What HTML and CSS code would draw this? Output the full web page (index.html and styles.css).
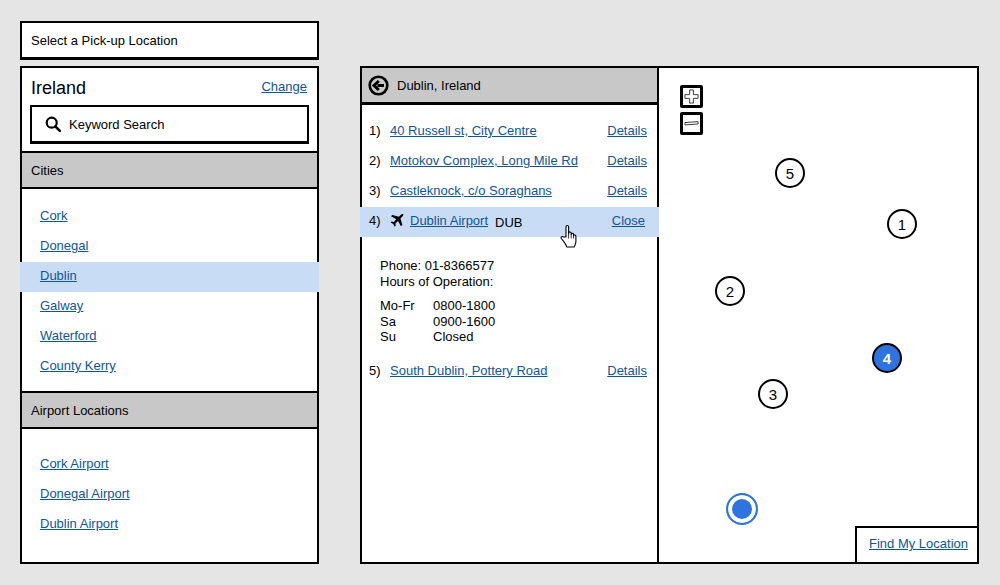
FILE: index.html
```html
<!DOCTYPE html>
<html lang="en">
<head>
<meta charset="utf-8">
<title>Select a Pick-up Location</title>
<link rel="stylesheet" href="styles.css">
</head>
<body>
<div class="page">
  <aside class="left">
    <div class="title-box">Select a Pick-up Location</div>
    <div class="panel">
      <div class="country">
        <div class="country-row"><span class="country-name">Ireland</span><a href="#">Change</a></div>
        <div class="search">
          <svg class="search-icon" width="16" height="16" viewBox="0 0 16 16"><circle cx="6.7" cy="6.7" r="5" fill="none" stroke="#000" stroke-width="2.2"/><path d="M10.3 10.3 14.8 14.8" stroke="#000" stroke-width="2.6" stroke-linecap="round"/></svg>
          <span>Keyword Search</span>
        </div>
      </div>
      <div class="bar">Cities</div>
      <ul class="list list-cities">
        <li><a href="#">Cork</a></li>
        <li><a href="#">Donegal</a></li>
        <li class="sel"><a href="#">Dublin</a></li>
        <li><a href="#">Galway</a></li>
        <li><a href="#">Waterford</a></li>
        <li><a href="#">County Kerry</a></li>
      </ul>
      <div class="bar">Airport Locations</div>
      <ul class="list list-airports">
        <li><a href="#">Cork Airport</a></li>
        <li><a href="#">Donegal Airport</a></li>
        <li><a href="#">Dublin Airport</a></li>
      </ul>
    </div>
  </aside>
  <main class="frame">
    <section class="results">
      <div class="bar bar-back">
        <svg width="21" height="21" viewBox="0 0 21 21"><circle cx="10.5" cy="10.5" r="8.8" fill="none" stroke="#000" stroke-width="2.6"/><path d="M16 10.5H9.5M10.8 6 6 10.5 10.8 15" fill="none" stroke="#000" stroke-width="3"/></svg>
        <span>Dublin, Ireland</span>
      </div>
      <ol class="locs">
        <li class="loc"><span class="num">1)</span><a href="#">40 Russell st, City Centre</a><a class="act" href="#">Details</a></li>
        <li class="loc"><span class="num">2)</span><a href="#">Motokov Complex, Long Mile Rd</a><a class="act" href="#">Details</a></li>
        <li class="loc"><span class="num">3)</span><a href="#">Castleknock, c/o Soraghans</a><a class="act" href="#">Details</a></li>
        <li class="loc loc-open">
          <span class="num">4)</span>
          <svg class="plane" width="14" height="14" viewBox="0 0 14 14"><path d="M13.6.4c-.8-.7-2-.3-2.9.6L8.900 2.800 2.300 1 1 2.300l5.300 3-2.500 2.600-2.200-.3-1 1 2.700 1.400 1.400 2.700 1-1-.3-2.200 2.600-2.500 3 5.300 1.300-1.300-1.800-6.600 1.800-1.800c.9-.9 1.300-2.100.6-2.900z"/></svg>
          <a href="#">Dublin Airport</a><span class="code">DUB</span><a class="act act-close" href="#">Close</a>
          <svg class="hand" width="18" height="26" viewBox="0 0 18 26"><path d="M6 13V3c0-2 2.600-2 2.600 0v7l.1-1c.3-1.500 2.400-1.400 2.500.1v1.300c.3-1.400 2.300-1.300 2.400.2v1.100c.4-1.200 2.200-1 2.300.5v5.300c0 2.600-1.200 3.500-1.600 5.500H6.700c-.5-2.300-2-3.800-3.500-6.200L1.300 14.500c-.8-1.500 1-2.700 2.200-1.500z" fill="#fff" stroke="#000" stroke-width="1.100" stroke-linejoin="round"/><path d="M8.600 10v4.500M11.200 10.300v4.200M13.600 11v3.500" stroke="#000" stroke-width=".8" fill="none"/></svg>
        </li>
        <li class="detail">
          <p>Phone: 01-8366577<br>Hours of Operation:</p>
          <dl class="hours">
            <dt>Mo-Fr</dt><dd>0800-1800</dd>
            <dt>Sa</dt><dd>0900-1600</dd>
            <dt>Su</dt><dd>Closed</dd>
          </dl>
        </li>
        <li class="loc"><span class="num">5)</span><a href="#">South Dublin, Pottery Road</a><a class="act" href="#">Details</a></li>
      </ol>
    </section>
    <section class="map">
      <div class="zoom zoom-in"><svg width="15" height="15" viewBox="0 0 16 16"><path d="M6 1h4v5h5v4h-5v5H6v-5H1V6h5z" fill="#fff" stroke="#333" stroke-width="1"/></svg></div>
      <div class="zoom zoom-out"><svg width="15" height="15" viewBox="0 0 16 16"><path d="M1 7 15 6v2.500L1 9.500z" fill="#fff" stroke="#333" stroke-width="1"/></svg></div>
      <span class="pin pin-1">1</span>
      <span class="pin pin-2">2</span>
      <span class="pin pin-3">3</span>
      <span class="pin pin-4">4</span>
      <span class="pin pin-5">5</span>
      <span class="me"></span>
      <div class="find"><a href="#">Find My Location</a></div>
    </section>
  </main>
</div>
</body>
</html>
```
FILE: styles.css
```css
* { box-sizing: border-box; }
html, body { margin: 0; height: 585px; overflow: hidden; }
body { background: #e5e5e5; color: #000; font: 13px/15px "Liberation Sans", Arial, sans-serif; }
a { color: #0f5599; text-decoration: underline; }
ul, ol { list-style: none; margin: 0; padding: 0; }

.page { display: flex; gap: 41px; padding: 21px 20px; }
.left { width: 299px; display: flex; flex-direction: column; gap: 6px; }

.title-box { height: 39px; padding: 10px 9px 0; background: #fff; border: 2px solid #000; border-bottom-width: 3px; }
.panel { height: 498px; background: #fff; border: 2px solid #000; display: flex; flex-direction: column; }

.country { flex: none; height: 83px; padding: 0 10px 0 8px; }
.country-row { display: flex; justify-content: space-between; align-items: center; height: 37px; padding-top: 3px; }
.country-name { font-size: 18px; line-height: 22px; padding-left: 1px; }
.country-row a { margin-top: -3px; }
.search { display: flex; align-items: center; gap: 8px; width: 279px; height: 39px; padding: 0 0 0 13px; border: 2px solid #000; border-bottom-width: 3px; }
.search-icon { flex: none; }

.bar { flex: none; height: 38px; margin: 0 -2px; padding: 0 9px; display: flex; align-items: center; background: #c8c8c8; border: 2px solid #000; }

.list-cities { flex: none; height: 202px; padding-top: 13px; }
.list-airports { flex: 1; padding-top: 21px; }
.list li { height: 30px; padding: 0 18px; line-height: 28px; }
.list li.sel { background: #c9dcf6; margin: 0 -2px; padding: 0 20px; }

.frame { width: 619px; height: 498px; margin-top: 45px; display: flex; background: #fff; border: 2px solid #000; }
.results { flex: none; width: 297px; border-right: 2px solid #000; display: flex; flex-direction: column; }
.bar-back { margin: -2px 0 0 -2px; width: 299px; height: 39px; gap: 8px; padding: 0 0 0 6px; border-bottom-width: 3px; }
.bar-back svg { flex: none; }

.locs { padding-top: 12px; }
.loc { position: relative; display: flex; align-items: center; height: 30px; padding: 0 10px 3px 7px; }
.num { width: 21px; flex: none; }
.act { margin-left: auto; }
.loc-open { margin: 0 -2px; padding: 0 12px 3px 9px; background: #c9dcf6; }
.plane { flex: none; margin: 1px 6px 0 0; }
.code { margin-left: 7px; padding-top: 3px; }
.act-close { padding-right: 2px; }
.hand { position: absolute; left: 200px; top: 17px; }

.detail { height: 120px; padding: 21px 0 0 18px; line-height: 15.5px; }
.detail p { margin: 0; }
.hours { display: grid; grid-template-columns: 53px 1fr; margin: 9px 0 0; }
.hours dt, .hours dd { margin: 0; }

.map { position: relative; flex: 1; }
.zoom { position: absolute; left: 21px; width: 23px; height: 23px; padding: 1px; background: #fff; border: 3px solid #000; border-radius: 2px; }
.zoom svg { display: block; }
.zoom-in { top: 17px; }
.zoom-out { top: 44px; }

.pin { position: absolute; width: 30px; height: 30px; display: flex; align-items: center; justify-content: center; font-size: 15px; background: #fff; border: 2px solid #000; border-radius: 50%; }
.pin-1 { left: 228px; top: 141px; }
.pin-2 { left: 56px; top: 208px; }
.pin-3 { left: 99px; top: 311px; }
.pin-4 { left: 213px; top: 275px; background: #2e74de; color: #fff; font-weight: bold; }
.pin-5 { left: 116px; top: 90px; }
.me { position: absolute; left: 67px; top: 425px; width: 32px; height: 32px; background: #2e74de; border: 2px solid #2e74de; box-shadow: inset 0 0 0 4px #fff; border-radius: 50%; }

.find { position: absolute; right: -2px; bottom: -2px; width: 124px; height: 38px; padding: 8px 0 0 12px; background: #fff; border: 2px solid #000; }
```
